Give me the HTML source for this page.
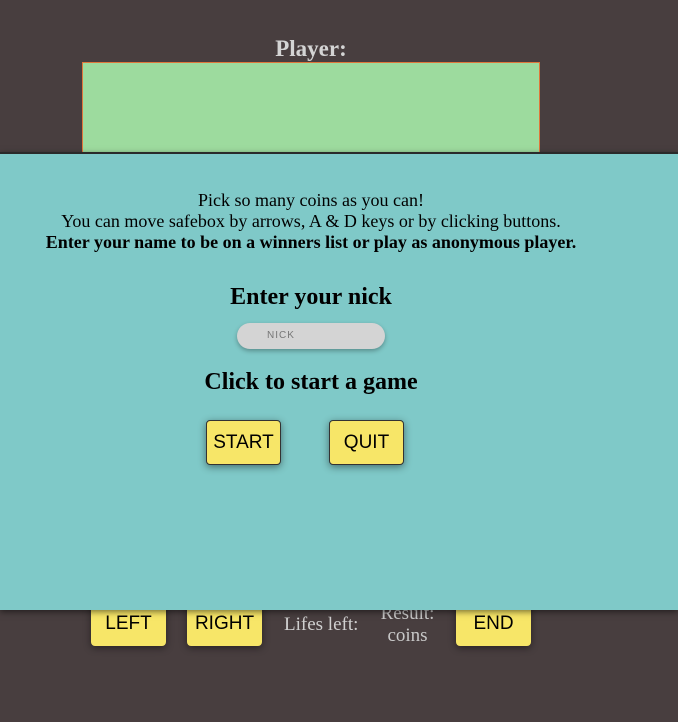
<!DOCTYPE html>
<html><head><style>
body{margin:0;width:678px;height:722px;background:#483e3f;position:relative;overflow:hidden;font-family:"Liberation Serif",serif;}
.abs{position:absolute}
.btn{position:absolute;background:#f7e668;border:1px solid #333;border-radius:4px;font-family:"Liberation Sans",sans-serif;font-size:19px;color:#000;display:flex;align-items:center;justify-content:center;box-sizing:border-box;box-shadow:0 2px 8px rgba(0,0,0,.45);}
.bb{border:none;border-radius:4px;padding-top:2px;}
</style></head><body>
<div class="abs" style="width:678px;top:36px;text-align:center;font-weight:bold;font-size:23px;color:#d4d4d4;left:-28px;">Player:</div>
<div class="abs" style="left:82px;top:62px;width:456px;height:100px;background:#9ddb9e;border:1px solid #e0763a;"></div>
<div class="btn bb" style="left:91px;top:600px;width:75px;height:46px;">LEFT</div>
<div class="btn bb" style="left:187px;top:600px;width:75px;height:46px;">RIGHT</div>
<div class="abs" style="left:284px;top:614px;font-size:19px;color:#d0d0d0;">Lifes left:</div>
<div class="abs" style="left:370px;top:603px;width:75px;text-align:center;font-size:19px;color:#c8c8c8;line-height:22px;">Result:<br>coins</div>
<div class="btn bb" style="left:456px;top:600px;width:75px;height:46px;">END</div>
<div class="abs" style="left:0;top:152px;width:678px;height:458px;background:#7fc9c8;border-top:2px solid #2a2a2a;box-shadow:0 2px 6px rgba(0,0,0,.5);box-sizing:border-box;">
<div class="abs" style="left:0;width:622px;top:36px;text-align:center;font-size:18px;line-height:21px;color:#000;">Pick so many coins as you can!<br>You can move safebox by arrows, A &amp; D keys or by clicking buttons.<br><b>Enter your name to be on a winners list or play as anonymous player.</b></div>
<div class="abs" style="left:0;width:622px;top:130px;text-align:center;font-size:24px;font-weight:bold;">Enter your nick</div>
<div class="abs" style="left:237px;top:169px;width:148px;height:26px;background:#d4d4d4;border-radius:13px;box-shadow:0 2px 5px rgba(0,0,0,.3);font-family:'Liberation Sans',sans-serif;font-size:10px;color:#777;letter-spacing:1px;line-height:26px;text-indent:30px;">NICK</div>
<div class="abs" style="left:0;width:622px;top:215px;text-align:center;font-size:24px;font-weight:bold;">Click to start a game</div>
<div class="btn" style="left:206px;top:266px;width:75px;height:45px;">START</div>
<div class="btn" style="left:329px;top:266px;width:75px;height:45px;">QUIT</div>
</div>
</body></html>
